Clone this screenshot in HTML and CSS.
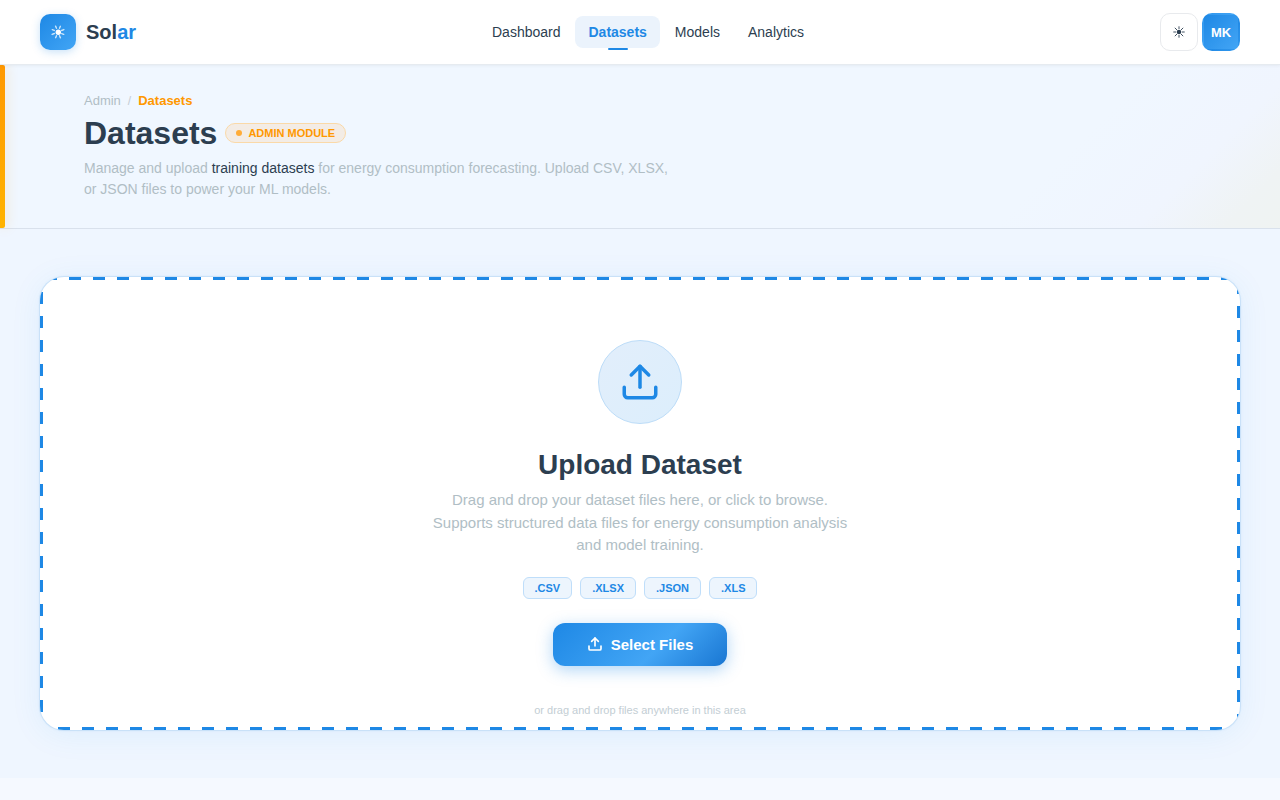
FILE: index.html
```html
<!DOCTYPE html>
<html lang="en">
<head>
  <meta charset="UTF-8" />
  <meta name="viewport" content="width=device-width, initial-scale=1.0" />
  <title>Solar - Datasets</title>
  <link rel="stylesheet" href="styles.css">
</head>
<body>

  <header class="navbar">
    <a href="#" class="logo">
      <span class="logo-icon">
        <svg width="16" height="16" viewBox="-8 -8 16 16" aria-hidden="true">
          <g transform="rotate(22.5)" stroke="#fff" stroke-width="1.4" stroke-linecap="round" opacity="0.75">
            <path d="M0-4V-6.2M0 4V6.2M-4 0H-6.2M4 0H6.2M-2.8-2.8L-4.5-4.5M2.8 2.8L4.5 4.5M-2.8 2.8L-4.5 4.5M2.8-2.8L4.5-4.5" />
          </g>
          <circle cx="0.3" cy="0.3" r="2.7" fill="#fff" />
        </svg>
      </span>
      <span class="logo-text">Sol<span class="accent">ar</span></span>
    </a>

    <nav class="nav-links">
      <a href="#">Dashboard</a>
      <a href="#" class="active">Datasets</a>
      <a href="#">Models</a>
      <a href="#">Analytics</a>
    </nav>

    <div class="nav-actions">
      <button class="theme-btn" type="button" aria-label="Toggle theme">
        <svg width="14" height="14" viewBox="-7 -7 14 14" aria-hidden="true">
          <path d="M0-3V-5.7M0 3V5.7M-3 0H-5.7M3 0H5.7M-2-2L-4.2-4.2M2 2L4.2 4.2M-2 2L-4.2 4.2M2-2L4.2-4.2" stroke="#2c3e50" stroke-width="0.9" />
          <circle r="2.3" fill="#2c3e50" />
        </svg>
      </button>
      <button class="avatar" type="button">MK</button>
    </div>
  </header>

  <section class="page-header">
    <div class="breadcrumb">
      <a href="#">Admin</a>
      <span class="separator">/</span>
      <span class="current">Datasets</span>
    </div>
    <div class="title-row">
      <h1>Datasets</h1>
      <span class="badge">ADMIN MODULE</span>
    </div>
    <p>Manage and upload <strong>training datasets</strong> for energy consumption forecasting. Upload CSV, XLSX, or JSON files to power your ML models.</p>
  </section>

  <main>
    <!-- Upload area -->
    <div class="upload-card">
      <div class="upload-icon">
        <svg width="42" height="42" viewBox="0 0 24 24" fill="none" stroke="#1e88e5" stroke-width="2" stroke-linecap="round" stroke-linejoin="round" aria-hidden="true">
          <path d="M21 15v4a2 2 0 0 1-2 2H5a2 2 0 0 1-2-2v-4" />
          <path d="M17 8l-5-5-5 5" />
          <path d="M12 3v12" />
        </svg>
      </div>
      <h2>Upload Dataset</h2>
      <p class="upload-text">Drag and drop your dataset files here, or click to browse. Supports structured data files for energy consumption analysis and model training.</p>
      <div class="formats">
        <span>.CSV</span>
        <span>.XLSX</span>
        <span>.JSON</span>
        <span>.XLS</span>
      </div>
      <button class="select-btn" type="button">
        <svg width="16" height="16" viewBox="0 0 24 24" fill="none" stroke="#fff" stroke-width="2.5" stroke-linecap="round" stroke-linejoin="round" aria-hidden="true">
          <path d="M21 15v4a2 2 0 0 1-2 2H5a2 2 0 0 1-2-2v-4" />
          <path d="M17 8l-5-5-5 5" />
          <path d="M12 3v12" />
        </svg>
        Select Files
      </button>
      <p class="hint">or drag and drop files anywhere in this area</p>
    </div>
  </main>

</body>
</html>
```
FILE: styles.css
```css
* {
  box-sizing: border-box;
  margin: 0;
  padding: 0;
}

body {
  font-family: "Liberation Sans", Arial, sans-serif;
  background: #f5f9ff;
  color: #2c3e50;
  min-height: 100vh;
}

a {
  color: inherit;
  text-decoration: none;
}

button {
  font-family: inherit;
  cursor: pointer;
}

/* NAVBAR */
.navbar {
  position: relative;
  z-index: 10;
  display: flex;
  justify-content: space-between;
  align-items: center;
  height: 65px;
  padding: 0 40px;
  background: #ffffff;
  border-bottom: 1px solid #e6ebf0;
  box-shadow: 0 1px 3px rgba(0, 0, 0, 0.05);
}

.logo {
  display: flex;
  align-items: center;
  gap: 10px;
}

.logo-icon {
  display: flex;
  align-items: center;
  justify-content: center;
  width: 36px;
  height: 36px;
  border-radius: 10px;
  background: linear-gradient(135deg, #1e88e5, #42a5f5);
  box-shadow: 0 2px 8px rgba(30, 136, 229, 0.25);
}

.logo-text {
  font-size: 20px;
  font-weight: bold;
}

.accent {
  color: #1e88e5;
}

.nav-links {
  display: flex;
  gap: 2px;
}

.nav-links a {
  position: relative;
  padding: 8px 13px;
  border-radius: 8px;
  font-size: 14px;
  line-height: 16px;
}

.nav-links .active {
  background: #ebf3fc;
  color: #1e88e5;
  font-weight: bold;
}

.nav-links .active::after {
  content: "";
  position: absolute;
  left: 50%;
  bottom: -2px;
  width: 20px;
  height: 2px;
  margin-left: -10px;
  border-radius: 1px;
  background: #1e88e5;
}

.nav-actions {
  display: flex;
  gap: 4px;
}

.theme-btn,
.avatar {
  display: flex;
  align-items: center;
  justify-content: center;
  width: 38px;
  height: 38px;
  border-radius: 10px;
}

.theme-btn {
  background: #ffffff;
  border: 1px solid #e8eaed;
}

.avatar {
  background: linear-gradient(135deg, #1e88e5, #42a5f5);
  border: 2px solid transparent;
  color: #ffffff;
  font-size: 13px;
  font-weight: bold;
}

/* PAGE HEADER */
.page-header {
  position: relative;
  padding: 28px 84px;
  background: linear-gradient(135deg, #f0f7ff 80%, #f0f5fe 90%, #eff3f4 96%, #eff3f2 100%);
  border-bottom: 1px solid #d9e1ec;
}

.page-header::before {
  content: "";
  position: absolute;
  left: 0;
  top: 0;
  bottom: 0;
  width: 5px;
  border-radius: 0 2px 2px 0;
  background: linear-gradient(180deg, #ff9800, #ffb300);
  box-shadow: 2px 0 12px rgba(255, 152, 0, 0.2);
}

.breadcrumb {
  display: flex;
  gap: 7px;
  margin-bottom: 6px;
  font-size: 13px;
  line-height: 16px;
  color: #b0bec5;
}

.separator {
  font-size: 12px;
  color: #c3ccd4;
}

.current {
  color: #ff9800;
  font-weight: bold;
}

.title-row {
  display: flex;
  align-items: center;
  gap: 8px;
  margin-bottom: 7px;
}

h1 {
  font-size: 32px;
  line-height: 36px;
}

.badge {
  display: flex;
  align-items: center;
  gap: 6px;
  padding: 3px 10px;
  border: 1px solid #fad9a8;
  border-radius: 20px;
  background: #f3ece5;
  color: #ff9800;
  font-size: 11px;
  font-weight: bold;
  line-height: 12px;
}

.badge::before {
  content: "";
  width: 6px;
  height: 6px;
  border-radius: 50%;
  background: #ffac38;
}

.page-header p {
  max-width: 600px;
  color: #b0bec5;
  font-size: 14px;
  line-height: 21px;
}

.page-header strong {
  color: #2c3e50;
  font-weight: 500;
}

/* UPLOAD */
main {
  padding: 48px 40px;
  background: #eff6ff;
}

.upload-card {
  display: flex;
  flex-direction: column;
  align-items: center;
  padding: 63px 40px 12px;
  border-radius: 24px;
  text-align: center;
  /* dashed frame: top, right, bottom, left */
  background:
    linear-gradient(90deg, #1e88e5 50%, transparent 50%) 5px 0 / 24px 3px repeat-x,
    linear-gradient(180deg, #1e88e5 50%, transparent 50%) 100% 5px / 3px 24px repeat-y,
    linear-gradient(90deg, #1e88e5 50%, transparent 50%) 18px 100% / 24px 3px repeat-x,
    linear-gradient(180deg, #1e88e5 50%, transparent 50%) 0 15px / 3px 24px repeat-y,
    #ffffff;
  box-shadow: 0 0 0 1px #c9e1f8, 0 0 3px rgba(30, 136, 229, 0.15), 0 4px 32px rgba(30, 136, 229, 0.08);
}

.upload-icon {
  display: flex;
  align-items: center;
  justify-content: center;
  width: 84px;
  height: 84px;
  margin-bottom: 24px;
  border: 1px solid #bcdcf8;
  border-radius: 50%;
  background: linear-gradient(135deg, #e2eefb, #dceefc);
}

h2 {
  margin-bottom: 7px;
  font-size: 28px;
  line-height: 34px;
}

.upload-text {
  max-width: 420px;
  margin-bottom: 20px;
  color: #b0bec5;
  font-size: 15px;
  line-height: 1.5;
}

.formats {
  display: flex;
  gap: 8px;
  margin-bottom: 24px;
}

.formats span {
  padding: 4px 11px;
  border: 1px solid #bfdefa;
  border-radius: 6px;
  background: #edf5fd;
  color: #1e88e5;
  font-size: 11px;
  font-weight: bold;
  line-height: 12px;
}

.select-btn {
  display: flex;
  align-items: center;
  gap: 8px;
  margin-bottom: 36px;
  padding: 13px 34px;
  border: none;
  border-radius: 12px;
  background: linear-gradient(135deg, #1e88e5 0%, #42a5f5 60%, #1976d2 100%);
  box-shadow: 0 4px 16px rgba(30, 136, 229, 0.35);
  color: #ffffff;
  font-size: 15px;
  font-weight: bold;
}

.hint {
  color: #c3ced4;
  font-size: 11px;
  line-height: 16px;
}
```
